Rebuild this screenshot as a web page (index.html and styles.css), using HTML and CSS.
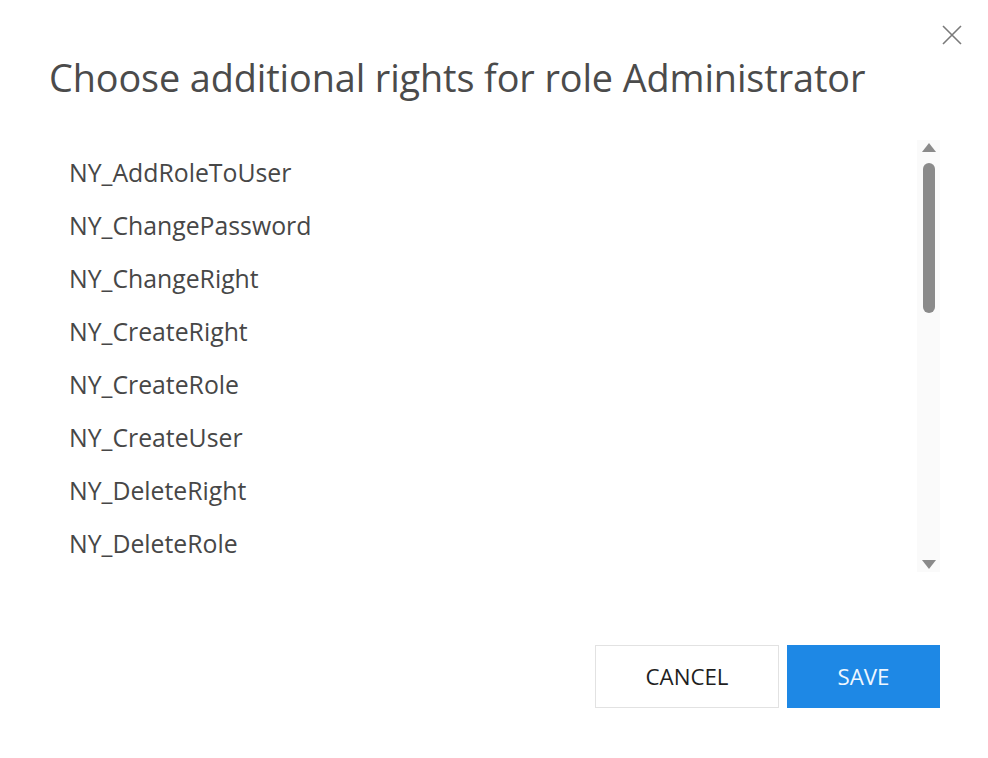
FILE: index.html
```html
<!DOCTYPE html>
<html lang="en">
<head>
<meta charset="utf-8">
<title>Choose additional rights</title>
<link rel="stylesheet" href="styles.css">
</head>
<body>
<div class="dialog">
  <button class="close" aria-label="Close">
    <svg width="20" height="20" viewBox="0 0 20 20"><path d="M1 1L19 19M19 1L1 19" stroke="#7a7a7a" stroke-width="1.6" fill="none"/></svg>
  </button>
  <h1 class="title">Choose additional rights for role Administrator</h1>
  <div class="listbox">
    <ul class="list">
      <li>NY_AddRoleToUser</li>
      <li>NY_ChangePassword</li>
      <li>NY_ChangeRight</li>
      <li>NY_CreateRight</li>
      <li>NY_CreateRole</li>
      <li>NY_CreateUser</li>
      <li>NY_DeleteRight</li>
      <li>NY_DeleteRole</li>
    </ul>
    <div class="scrollbar">
      <span class="arrow up"></span>
      <span class="thumb"></span>
      <span class="spacer"></span>
      <span class="arrow down"></span>
    </div>
  </div>
  <div class="actions">
    <button class="btn cancel">CANCEL</button>
    <button class="btn save">SAVE</button>
  </div>
</div>
</body>
</html>
```
FILE: styles.css
```css
* { box-sizing: border-box; }
html, body { margin: 0; padding: 0; background: #fff; }
body { font-family: "Open Sans", "Noto Sans", sans-serif; }
.dialog {
  position: relative;
  width: 988px;
  height: 758px;
  padding: 0 48px 0 49px;
  display: flex;
  flex-direction: column;
}
.close {
  position: absolute;
  top: 25px;
  left: 942px;
  width: 20px;
  height: 20px;
  padding: 0;
  border: 0;
  background: none;
  display: flex;
}
.title {
  margin: 52px 0 0 0;
  font-size: 37.8px;
  line-height: 52px;
  font-weight: 400;
  color: #4b4b4b;
  letter-spacing: -0.1px;
}
.listbox {
  margin-top: 36px;
  height: 432px;
  display: flex;
}
.list {
  flex: 1;
  list-style: none;
  margin: 0;
  padding: 6px 0 0 20px;
  overflow: hidden;
}
.list li {
  height: 53px;
  line-height: 53px;
  font-size: 24.8px;
  color: #474747;
}
.scrollbar {
  width: 23px;
  background: #fafafa;
  display: flex;
  flex-direction: column;
  align-items: center;
  padding: 3px 0 3px 0;
}
.arrow {
  width: 0;
  height: 0;
  border-left: 7px solid transparent;
  border-right: 7px solid transparent;
}
.arrow.up { border-bottom: 9px solid #8a8a8a; }
.arrow.down { border-top: 9px solid #8a8a8a; }
.thumb {
  margin-top: 11px;
  width: 12px;
  height: 150px;
  border-radius: 6px;
  background: #8a8a8a;
}
.spacer { flex: 1; }
.actions {
  margin-top: 73px;
  display: flex;
  justify-content: flex-end;
  gap: 8px;
}
.btn {
  height: 63px;
  font-family: "Open Sans", "Noto Sans", sans-serif;
  font-size: 22.3px;
  padding: 0;
  cursor: pointer;
}
.cancel {
  width: 184px;
  background: #fff;
  border: 1px solid #e2e2e2;
  color: #1f1f1f;
}
.save {
  width: 153px;
  background: #1e88e5;
  border: 0;
  color: #eef7ff;
}
```
